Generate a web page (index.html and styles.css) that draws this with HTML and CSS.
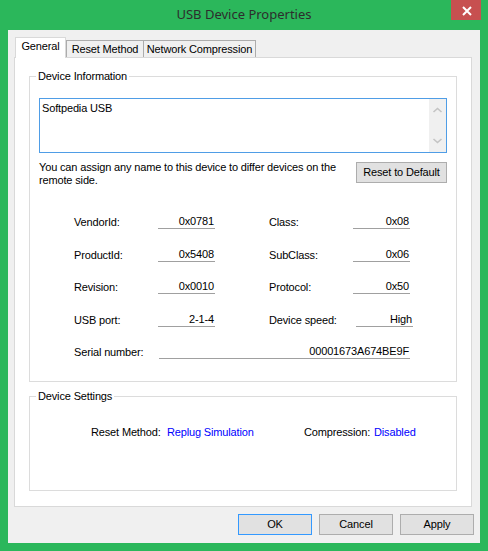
FILE: index.html
```html
<!DOCTYPE html>
<html>
<head>
<meta charset="utf-8">
<title>USB Device Properties</title>
<link rel="stylesheet" href="styles.css">
</head>
<body>
<div class="window">
  <div class="titlebar">
    <div></div>
    <div class="title">USB Device Properties</div>
    <div class="close">
      <svg width="30" height="20" viewBox="0 0 30 20">
        <path d="M12 7 L20 15 M20 7 L12 15" stroke="#fff" stroke-width="2" fill="none"/>
      </svg>
    </div>
  </div>
  <div class="client">
    <div class="tabs">
      <div class="tab tab-active tab-general">General</div>
      <div class="tab tab-reset">Reset Method</div>
      <div class="tab tab-network">Network Compression</div>
    </div>
    <div class="panel">
      <fieldset class="group group-info">
        <legend>Device Information</legend>
        <div class="namebox">
          <div class="nametext">Softpedia USB</div>
          <div class="scrollbar">
            <svg width="17" height="6" viewBox="0 0 17 6"><path d="M4.5 5 L8.5 1.5 L12.5 5" stroke="#c4c4c4" stroke-width="1.6" fill="none"/></svg>
            <svg width="17" height="6" viewBox="0 0 17 6"><path d="M4.5 1 L8.5 4.5 L12.5 1" stroke="#c4c4c4" stroke-width="1.6" fill="none"/></svg>
          </div>
        </div>
        <div class="help-row">
          <div class="help-text">You can assign any name to this device to differ devices on the<br>remote side.</div>
          <button class="btn btn-reset">Reset to Default</button>
        </div>
        <div class="fields">
          <div class="lbl">VendorId:</div><div class="val">0x0781</div><div></div>
          <div class="lbl">Class:</div><div class="val">0x08</div>
          <div class="lbl">ProductId:</div><div class="val">0x5408</div><div></div>
          <div class="lbl">SubClass:</div><div class="val">0x06</div>
          <div class="lbl">Revision:</div><div class="val">0x0010</div><div></div>
          <div class="lbl">Protocol:</div><div class="val">0x50</div>
          <div class="lbl">USB port:</div><div class="val">2-1-4</div><div></div>
          <div class="lbl">Device speed:</div><div class="val val-shift">High</div>
          <div class="lbl">Serial number:</div><div class="val val-serial">00001673A674BE9F</div>
        </div>
      </fieldset>
      <fieldset class="group group-settings">
        <legend>Device Settings</legend>
        <div class="settings">
          <div class="s-lbl">Reset Method:</div>
          <div class="s-val">Replug Simulation</div>
          <div class="s-lbl s-lbl2">Compression:</div>
          <div class="s-val s-val2">Disabled</div>
        </div>
      </fieldset>
    </div>
    <div class="buttons">
      <button class="btn btn-dlg btn-default">OK</button>
      <button class="btn btn-dlg">Cancel</button>
      <button class="btn btn-dlg">Apply</button>
    </div>
  </div>
</div>
</body>
</html>
```
FILE: styles.css
```css
* { box-sizing: border-box; }
html, body { margin: 0; padding: 0; }
body {
  width: 488px;
  height: 551px;
  overflow: hidden;
  font-family: "Liberation Sans", Arial, sans-serif;
  font-size: 11px;
  letter-spacing: -0.15px;
  color: #000;
}
.window {
  width: 488px;
  height: 551px;
  background: #2bb75b;
  display: flex;
  flex-direction: column;
}
.titlebar {
  height: 30px;
  display: grid;
  grid-template-columns: 1fr auto 1fr;
}
.title {
  font-family: "Noto Sans", "Open Sans", sans-serif;
  font-size: 13px;
  letter-spacing: 0;
  line-height: 29px;
  color: #2d2d2d;
  text-align: center;
}
.close {
  justify-self: end;
  align-self: start;
  width: 30px;
  height: 20px;
  margin-right: 7px;
  background: #c75050;
  display: flex;
}
.client {
  flex: 1;
  margin: 0 8px 8px 8px;
  background: #f0f0f0;
  padding: 7px 8px 8px 6px;
  display: flex;
  flex-direction: column;
}
.tabs {
  display: flex;
  align-items: flex-start;
  margin-left: 1px;
  margin-bottom: -1px;
  position: relative;
  z-index: 1;
  height: 21px;
}
.tab {
  border: 1px solid #acacac;
  border-bottom: none;
  background: #f0f0f0;
  height: 17px;
  margin-top: 3px;
  text-align: center;
  line-height: 16px;
  white-space: nowrap;
}
.tab-active {
  background: #fff;
  border-color: #d9d9d9;
  height: 21px;
  margin-top: 0;
  line-height: 17px;
}
.tab-general { width: 51px; }
.tab-reset { width: 78px; }
.tab-network { width: 112px; border-left: none; }
.panel {
  background: #fff;
  border: 1px solid #d9d9d9;
  padding: 12px 14px 15px 14px;
}
.group {
  margin: 0;
  border: 1px solid #dcdcdc;
  padding: 0;
  min-width: 0;
}
.group legend {
  padding: 0 2px;
  margin-left: 6px;
  line-height: 13px;
  font-size: 11px;
}
.group-info {
  padding: 15px 9px 22px 9px;
}
.group-info legend {
  margin-left: -3px;
}
.group-settings {
  margin-top: 8px;
  padding: 23px 0 51px 0;
}
.namebox {
  height: 55px;
  border: 1px solid #4f9de6;
  display: flex;
  background: #fff;
}
.nametext {
  flex: 1;
  padding: 3px 2px;
  line-height: 13px;
}
.scrollbar {
  width: 17px;
  background: #f0f0f0;
  display: flex;
  flex-direction: column;
  justify-content: space-between;
  padding: 8px 0 8px 0;
}
.scrollbar svg { display: block; }
.help-row {
  margin-top: 8px;
  display: flex;
  justify-content: space-between;
  align-items: flex-start;
}
.help-text {
  line-height: 13px;
  white-space: nowrap;
}
.btn {
  font-family: "Liberation Sans", Arial, sans-serif;
  font-size: 11px;
  letter-spacing: -0.15px;
  color: #000;
  background: #e1e1e1;
  border: 1px solid #adadad;
  height: 21px;
  padding: 0;
  margin: 0;
  line-height: 19px;
}
.btn-reset {
  width: 91px;
  margin-top: 1px;
}
.fields {
  margin-top: 22px;
  margin-left: 35px;
  display: grid;
  grid-template-columns: 84px 57px 54px 84px 57px;
  grid-auto-rows: 20px;
  row-gap: 12.5px;
}
.lbl {
  align-self: end;
  line-height: 13px;
  white-space: nowrap;
}
.val {
  border-bottom: 1px solid #a0a0a0;
  text-align: right;
  line-height: 13px;
  display: flex;
  align-items: flex-end;
  justify-content: flex-end;
  padding-right: 1px;
  white-space: nowrap;
}
.val-shift {
  margin-left: 3px;
  margin-right: -3px;
}
.val-serial {
  grid-column: 2 / 6;
  margin-left: 1px;
}
.settings {
  display: grid;
  grid-template-columns: 76px 137px 70px auto;
  padding-left: 61px;
  line-height: 13px;
  white-space: nowrap;
}
.s-val { color: #0000ff; }
.buttons {
  margin-top: 7px;
  margin-right: -2px;
  display: flex;
  justify-content: flex-end;
  gap: 7px;
}
.btn-dlg {
  width: 74px;
}
.btn-default {
  border-color: #3399ff;
}
```
